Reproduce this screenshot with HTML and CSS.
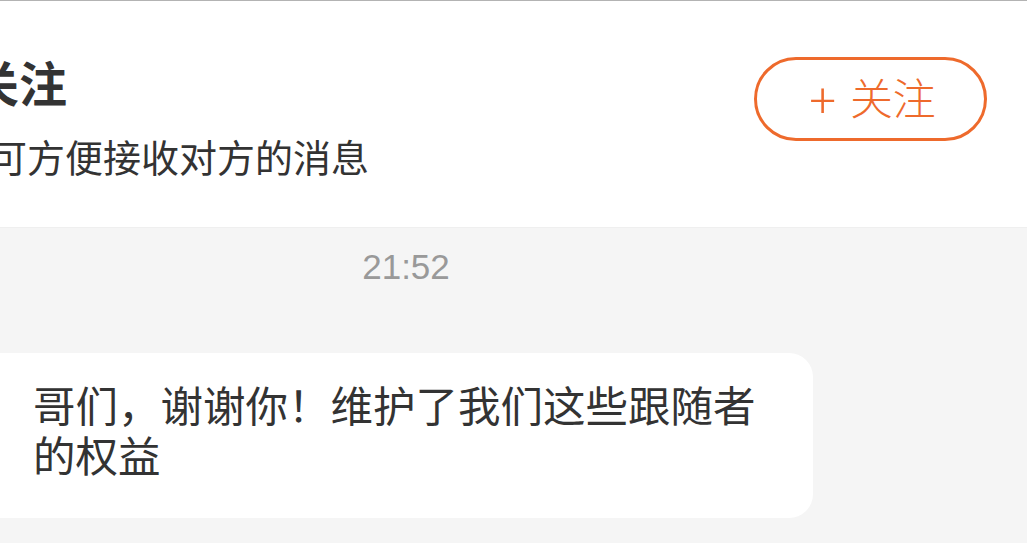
FILE: index.html
```html
<!DOCTYPE html>
<html lang="zh-CN">
<head>
    <meta charset="UTF-8">
    <meta name="viewport" content="width=device-width, initial-scale=1.0">
    <title>私信</title>
    <link rel="stylesheet" href="styles.css">
</head>
<body>

<div class="page">
    <!-- 关注提示 -->
    <div class="follow-bar">
        <div class="follow-text">
            <div class="follow-title">尚未关注</div>
            <div class="follow-desc">关注后可方便接收对方的消息</div>
        </div>
        <button class="follow-btn"><span class="plus">+</span>关注</button>
    </div>

    <!-- 聊天内容 -->
    <div class="chat">
        <div class="chat-time">21:52</div>
        <div class="bubble">哥们，谢谢你！维护了我们这些跟随者的权益</div>
    </div>
</div>

</body>
</html>
```

FILE: styles.css
```css
body {
    margin: 0;
    padding: 0;
    font-family: "Noto Sans CJK SC", "Liberation Sans", sans-serif;
    color: #333;
    background: #f5f5f5;
    overflow: hidden;
}
.page {
    height: 543px;
    border-top: 1px solid #b3b3b3;
    background: #f5f5f5;
}
.follow-bar {
    display: flex;
    justify-content: space-between;
    align-items: flex-start;
    height: 227px;
    padding: 0 40px 0 0;
    background: #fff;
    border-bottom: 1px solid #efefef;
    box-sizing: border-box;
}
.follow-text {
    margin-left: -125px;
    padding-top: 52px;
    white-space: nowrap;
}
.follow-title {
    font-size: 48px;
    line-height: 56px;
    font-weight: bold;
    color: #333;
}
.follow-desc {
    margin-top: 24px;
    font-size: 38px;
    line-height: 46px;
    color: #333;
}
.follow-btn {
    display: flex;
    align-items: center;
    justify-content: center;
    margin-top: 56px;
    width: 233px;
    height: 84px;
    border: 3px solid #ee6a2c;
    border-radius: 42px;
    background: #fff;
    color: #ee6a2c;
    font-family: "Noto Sans CJK SC", sans-serif;
    font-size: 43px;
    font-weight: 300;
    line-height: 1;
    padding: 0 0 5px 4px;
    box-sizing: border-box;
}
.follow-btn .plus {
    font-size: 50px;
    margin-right: 14px;
}
.chat {
    width: 812px;
}
.chat-time {
    padding-top: 19px;
    text-align: center;
    font-family: "Liberation Sans", Arial, sans-serif;
    font-size: 35px;
    line-height: 40px;
    color: #999;
}
.bubble {
    margin: 66px 0 0 -30px;
    width: 843px;
    padding: 26px 40px 39px 63px;
    box-sizing: border-box;
    background: #fff;
    border-radius: 24px;
    font-size: 42.5px;
    line-height: 50px;
    color: #333;
}
```
